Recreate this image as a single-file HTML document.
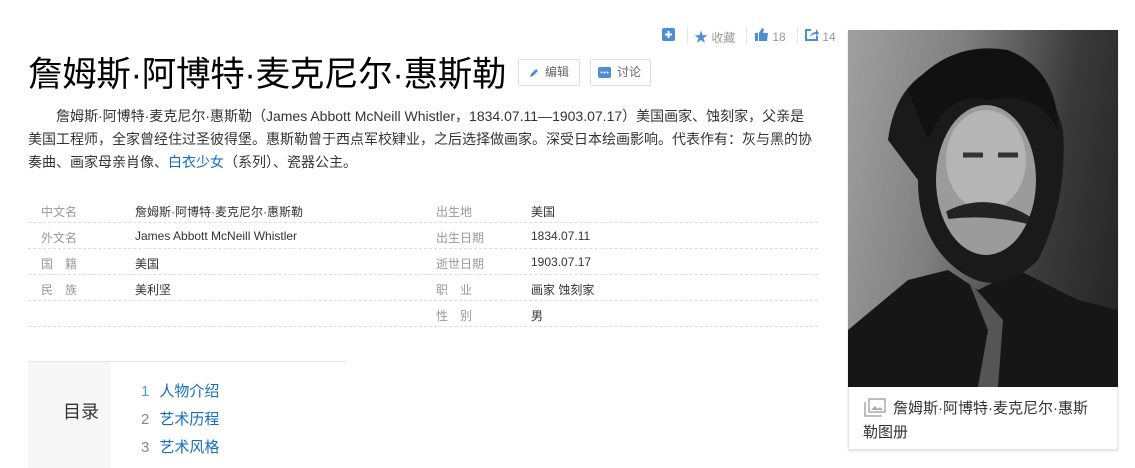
<!DOCTYPE html>
<html><head><meta charset="utf-8"><style>
*{margin:0;padding:0;box-sizing:border-box}
body{width:1135px;height:468px;overflow:hidden;background:#fff;font-family:"Liberation Sans","Noto Sans CJK SC",sans-serif;color:#333;position:relative}
.abs{position:absolute}
.title{left:28px;top:46px;font-size:34.5px;color:#000;white-space:nowrap;letter-spacing:-0.3px}
.btn{top:59px;height:27px;border:1px solid #ddd;border-radius:2px;font-size:12px;color:#666;line-height:25px;padding-left:26px}
.tools{top:28px;font-size:12px;color:#999;line-height:16px}
.para{left:28px;top:105px;width:790px;font-size:14px;line-height:23px;color:#333}
.para a{color:#136ec2}
.row{left:28px;width:790px;height:26px;border-bottom:1px dashed #ddd;font-size:12px}
.row span{position:absolute;top:6px;white-space:nowrap}
.l{color:#999}
.cat{left:28px;top:361px;width:318px;border-top:1px solid #e5e5e5}
</style></head><body>
<div class="abs title">詹姆斯·阿博特·麦克尼尔·惠斯勒</div>
<div class="abs btn" style="left:518px;width:62px"><svg class="abs" style="left:9px;top:7px" width="12" height="12" viewBox="0 0 12 12"><path d="M2 10 L3 7 L8 2 L10 4 L5 9 Z" fill="#4b8ed6"/></svg>编辑</div>
<div class="abs btn" style="left:590px;width:61px"><svg class="abs" style="left:7px;top:7px" width="13" height="11"><rect width="13" height="11" rx="2" fill="#4b8ed6"/><circle cx="3.5" cy="5.5" r="1" fill="#fff"/><circle cx="6.5" cy="5.5" r="1" fill="#fff"/><circle cx="9.5" cy="5.5" r="1" fill="#fff"/></svg>讨论</div>
<div class="abs tools" style="left:662px"><svg width="13" height="13"><rect width="13" height="13" rx="2" fill="#4b8ed6"/><path d="M6.5 3v7M3 6.5h7" stroke="#fff" stroke-width="2"/></svg></div>
<div class="abs" style="left:687px;top:27px;width:1px;height:17px;background:#e5e5e5"></div>
<div class="abs tools" style="left:694px;top:29px"><span style="color:#4b8ed6;font-size:14px">★</span> 收藏</div>
<div class="abs" style="left:746px;top:27px;width:1px;height:17px;background:#e5e5e5"></div>
<div class="abs tools" style="left:755px"><svg width="14" height="13"><rect x="0" y="5" width="3" height="8" fill="#4b8ed6"/><path d="M4 5 L7 0 L9 1 L8 5 L13 5 L12 13 L4 13Z" fill="#4b8ed6"/></svg> 18</div>
<div class="abs" style="left:797px;top:27px;width:1px;height:17px;background:#e5e5e5"></div>
<div class="abs tools" style="left:805px"><svg width="14" height="13"><path d="M6 2H1v10h11V8" stroke="#4b8ed6" stroke-width="2" fill="none"/><path d="M5 9 Q6 4 11 4 V1 L14 5 L11 8 V6 Q7 6 5 9Z" fill="#4b8ed6"/></svg> 14</div>
<div class="abs para">&emsp;&emsp;詹姆斯·阿博特·麦克尼尔·惠斯勒（James Abbott McNeill Whistler，1834.07.11—1903.07.17）美国画家、蚀刻家，父亲是美国工程师，全家曾经住过圣彼得堡。惠斯勒曾于西点军校肄业，之后选择做画家。深受日本绘画影响。代表作有：灰与黑的协奏曲、画家母亲肖像、<a>白衣少女</a>（系列）、瓷器公主。</div>
<div class="abs row" style="top:197px"><span class="l" style="left:13px">中文名</span><span style="left:107px">詹姆斯·阿博特·麦克尼尔·惠斯勒</span><span class="l" style="left:408px">出生地</span><span style="left:503px">美国</span></div>
<div class="abs row" style="top:223px"><span class="l" style="left:13px">外文名</span><span style="left:107px">James Abbott McNeill Whistler</span><span class="l" style="left:408px">出生日期</span><span style="left:503px">1834.07.11</span></div>
<div class="abs row" style="top:249px"><span class="l" style="left:13px">国&emsp;籍</span><span style="left:107px">美国</span><span class="l" style="left:408px">逝世日期</span><span style="left:503px">1903.07.17</span></div>
<div class="abs row" style="top:275px"><span class="l" style="left:13px">民&emsp;族</span><span style="left:107px">美利坚</span><span class="l" style="left:408px">职&emsp;业</span><span style="left:503px">画家 蚀刻家</span></div>
<div class="abs row" style="top:301px"><span class="l" style="left:408px">性&emsp;别</span><span style="left:503px">男</span></div>
<div class="abs cat"></div>
<div class="abs" style="left:28px;top:362px;width:83px;height:106px;background:#f7f7f7"></div>
<div class="abs" style="left:63px;top:398px;font-size:18px;color:#333">目录</div>
<div class="abs" style="left:141px;top:378px;font-size:15px;line-height:28px;color:#136ec2"><div><span style="color:#4b9fd6;margin-right:10px">1</span>人物介绍</div><div><span style="color:#888;margin-right:10px">2</span>艺术历程</div><div><span style="color:#888;margin-right:10px">3</span>艺术风格</div></div>
<div class="abs" style="left:848px;top:30px;width:270px;height:420px;border:1px solid #e5e5e5;box-shadow:0 1px 2px #ddd;background:#fff"></div>
<div class="abs" style="left:848px;top:30px;width:270px;height:357px;overflow:hidden;background:linear-gradient(100deg,#a0a0a0 0%,#808080 35%,#3a3a3a 70%,#222 100%)">
<svg width="270" height="357">
<path d="M0 300 L60 250 L100 240 L130 260 L170 240 L230 270 L270 280 L270 357 L0 357Z" fill="#161616"/>
<path d="M40 110 Q50 30 130 30 Q200 35 215 100 Q220 170 190 230 Q150 270 110 240 Q70 210 70 150 Z" fill="#1a1a1a"/>
<ellipse cx="138" cy="150" rx="50" ry="75" fill="#9b9b9b"/>
<ellipse cx="138" cy="130" rx="40" ry="50" fill="#b5b5b5"/>
<path d="M100 185 Q138 165 180 190 Q140 180 100 185Z" fill="#222" stroke="#222" stroke-width="8"/>
<path d="M115 125 h20 M150 125 h20" stroke="#333" stroke-width="5"/>
<path d="M60 60 Q100 10 160 20 Q210 40 210 100 Q190 60 140 70 Q100 60 80 110Z" fill="#111"/>
<path d="M120 250 L140 300 L130 357 L150 357 L155 290 Z" fill="#555"/>
</svg></div>
<svg class="abs" style="left:864px;top:398px" width="22" height="19"><path d="M1 4v14h17" stroke="#aaa" fill="none" stroke-width="1.5"/><rect x="5" y="1" width="16" height="13" stroke="#aaa" fill="none" stroke-width="1.5"/><path d="M7 12 L11 8 L14 11 L16 9 L19 12Z" fill="#aaa"/></svg>
<div class="abs" style="left:863px;top:397px;width:250px;font-size:15px;line-height:24px;color:#333;white-space:nowrap"><span style="padding-left:30px"></span>詹姆斯·阿博特·麦克尼尔·惠斯<br>勒图册</div>
</body></html>
